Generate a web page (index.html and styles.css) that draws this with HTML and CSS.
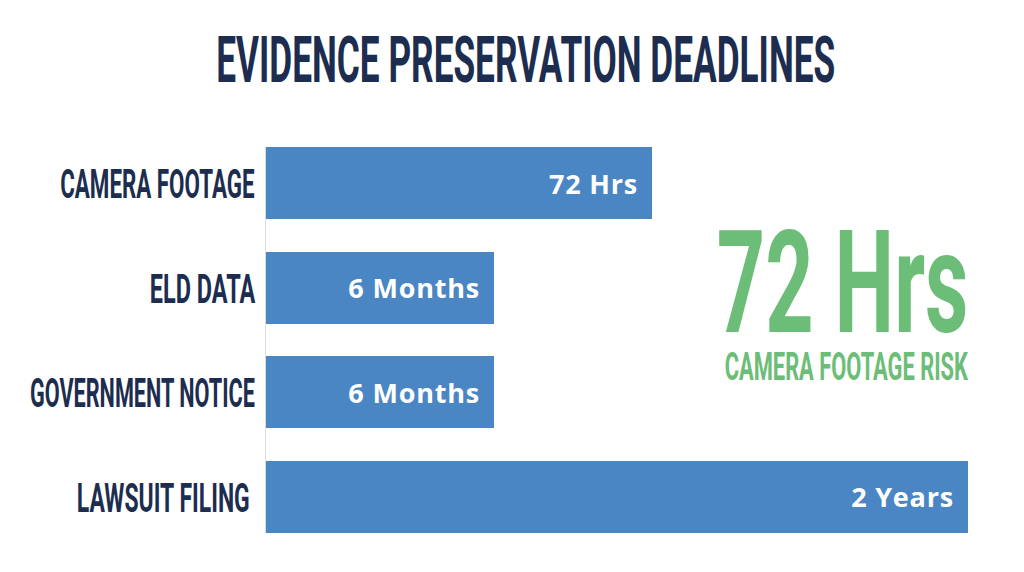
FILE: index.html
```html
<!DOCTYPE html>
<html lang="en">
<head>
<meta charset="utf-8">
<title>Evidence Preservation Deadlines</title>
<link rel="stylesheet" href="styles.css">
</head>
<body>
<main class="slide">
  <h1 class="title"><span class="squeeze title-text">EVIDENCE PRESERVATION DEADLINES</span></h1>
  <section class="chart">
    <div class="axis"></div>

    <div class="label row-1"><span class="squeeze label-text">CAMERA FOOTAGE</span></div>
    <div class="bar row-1" style="width: 386px"><span class="value">72 Hrs</span></div>

    <div class="label row-2"><span class="squeeze label-text label-wide">ELD DATA</span></div>
    <div class="bar row-2" style="width: 228px"><span class="value">6 Months</span></div>

    <div class="label row-3"><span class="squeeze label-text label-tight">GOVERNMENT NOTICE</span></div>
    <div class="bar row-3" style="width: 228px"><span class="value">6 Months</span></div>

    <div class="label row-4 label-offset"><span class="squeeze label-text label-lawsuit">LAWSUIT FILING</span></div>
    <div class="bar row-4" style="width: 702px"><span class="value">2 Years</span></div>

    <div class="callout">
      <div class="callout-big"><span class="squeeze big-text">72 Hrs</span></div>
      <div class="callout-sub"><span class="squeeze sub-text">CAMERA FOOTAGE RISK</span></div>
    </div>
  </section>
</main>
</body>
</html>
```
FILE: styles.css
```css
html, body {
  margin: 0;
  padding: 0;
  background: #ffffff;
}

.slide {
  width: 1024px;
  height: 572px;
  box-sizing: border-box;
  padding-top: 29px;
  overflow: hidden;
  font-family: Roboto, "Liberation Sans", sans-serif;
}

.squeeze {
  display: inline-block;
  white-space: nowrap;
  flex-shrink: 0;
}

.title {
  margin: 0;
  padding-left: 28px;
  display: flex;
  justify-content: center;
  font-size: 64px;
  line-height: 64px;
  font-weight: 700;
  color: #1c2d4f;
}

.title-text {
  transform: scaleX(0.55);
  transform-origin: center center;
}

.chart {
  margin-top: 54px;
  display: grid;
  grid-template-columns: 255px 10px 703px;
  grid-template-rows: repeat(4, 72px);
  row-gap: 32.5px;
}

.axis {
  grid-column: 3;
  grid-row: 1 / 5;
  border-left: 1px solid #dcdcdc;
}

.label {
  grid-column: 1;
  display: flex;
  align-items: center;
  justify-content: flex-end;
  font-size: 41px;
  line-height: 41px;
  font-weight: 700;
  color: #1c2d4f;
  padding-top: 3px;
}

.label-offset {
  padding-right: 5px;
}

.label-text {
  transform: scaleX(0.545);
  transform-origin: right center;
}

.label-text.label-wide {
  transform: scaleX(0.572);
}

.label-text.label-tight {
  transform: scaleX(0.528);
}

.label-text.label-lawsuit {
  transform: scaleX(0.56);
}

.row-1 { grid-row: 1; }
.row-2 { grid-row: 2; }
.row-3 { grid-row: 3; }
.row-4 { grid-row: 4; }

.bar {
  grid-column: 3;
  margin-left: 1px;
  box-sizing: border-box;
  background: #4a86c4;
  display: flex;
  align-items: center;
  justify-content: flex-end;
  padding-right: 14px;
}

.value {
  font-family: "Open Sans", "Liberation Sans", sans-serif;
  font-weight: 700;
  font-size: 27px;
  line-height: 27px;
  letter-spacing: 0.8px;
  color: #ffffff;
}

.callout {
  grid-column: 3;
  grid-row: 1 / 4;
  justify-self: end;
  align-self: start;
  margin-top: 76px;
  text-align: right;
  color: #6bbd77;
  font-weight: 700;
}

.callout-big {
  font-size: 143px;
  line-height: 120px;
}

.big-text {
  transform: scaleX(0.59);
  transform-origin: right center;
}

.callout-sub {
  margin-top: 5px;
  font-size: 38px;
  line-height: 38px;
}

.sub-text {
  transform: scaleX(0.575);
  transform-origin: right center;
}
```
